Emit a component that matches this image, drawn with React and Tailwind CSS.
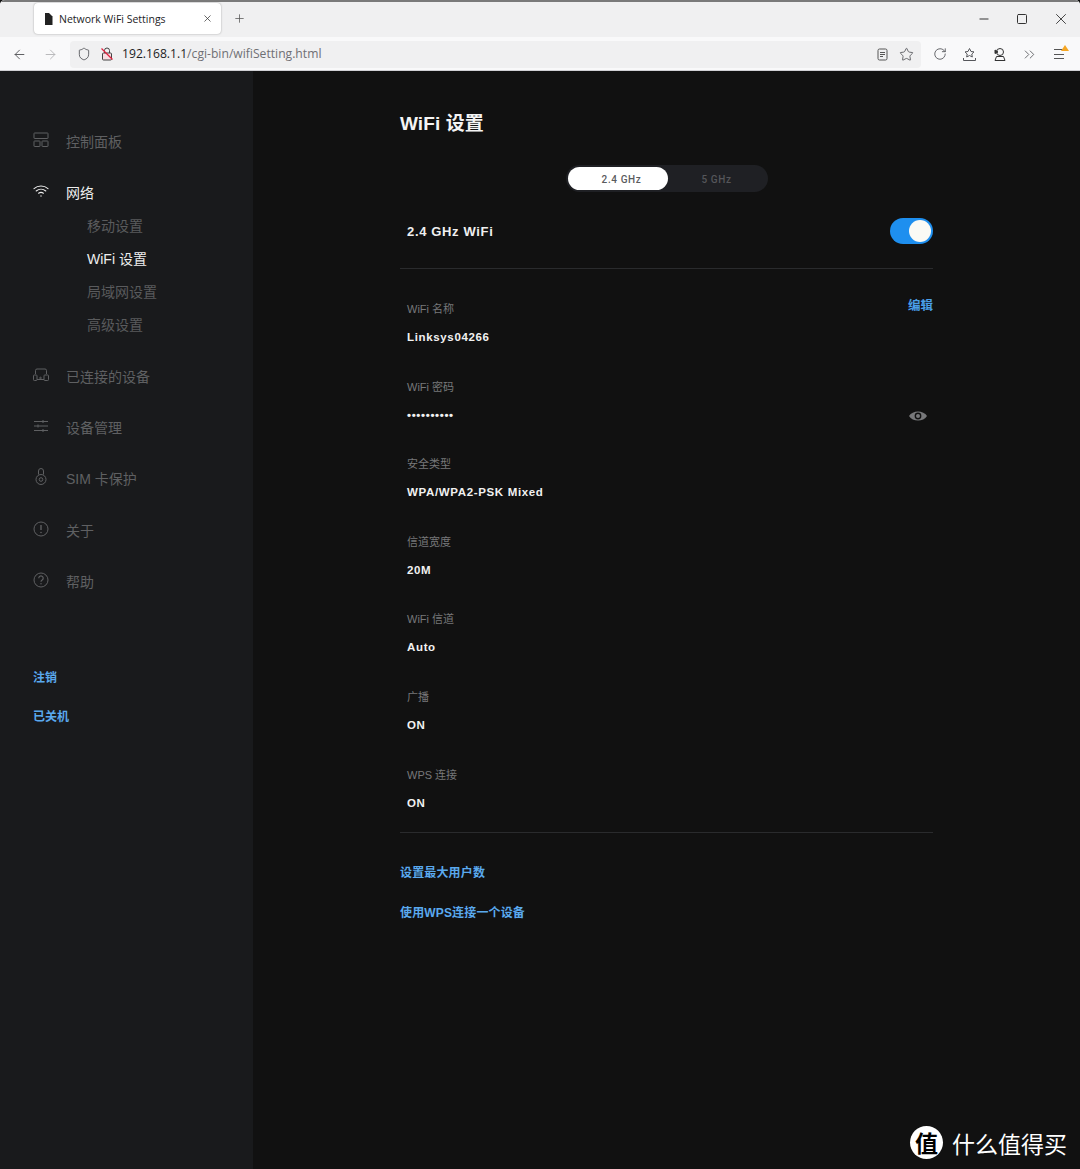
import React from 'react'
import { ArrowLeft, ArrowRight, RotateCw, X, Plus, Minus, Square, Shield, Star, ChevronsRight } from 'lucide-react'

const FONT = "font-['Liberation_Sans','Noto_Sans_CJK_SC',sans-serif]"

// sidebar icons, drawn to match the router admin page
const icons = {
  dashboard: (
    <svg width="16" height="16" viewBox="0 0 16 16" fill="none" stroke="currentColor" strokeWidth="1">
      <rect x="1" y="1" width="14" height="5.5" rx="0.5" />
      <rect x="1" y="9" width="6" height="5.5" rx="0.5" />
      <rect x="9" y="9" width="6" height="5.5" rx="0.5" />
    </svg>
  ),
  wifi: (
    <svg width="16" height="16" viewBox="0 0 16 16" fill="none" stroke="currentColor" strokeWidth="1.1" strokeLinecap="round">
      <path d="M1 5.6c4-3.4 10-3.4 14 0" />
      <path d="M3.2 8c2.8-2.3 6.8-2.3 9.6 0" />
      <path d="M5.6 10.2c1.5-1 3.3-1 4.8 0" />
      <circle cx="8" cy="13" r="0.7" fill="currentColor" stroke="none" />
    </svg>
  ),
  devices: (
    <svg width="16" height="16" viewBox="0 0 16 16" fill="none" stroke="currentColor" strokeWidth="1">
      <path d="M2.5 7V3.500A1.500 1.500 0 0 1 4 2h8a1.500 1.500 0 0 1 1.500 1.500V7" />
      <rect x="0.5" y="8" width="3.500" height="5.500" rx="0.800" />
      <rect x="11" y="8" width="4.500" height="5.500" rx="0.800" />
      <path d="M4 12.500h7" />
      <circle cx="7.500" cy="11" r="0.800" />
    </svg>
  ),
  sliders: (
    <svg width="16" height="16" viewBox="0 0 16 16" fill="none" stroke="currentColor" strokeWidth="1">
      <path d="M1 3.500h14M1 8h14M1 12.500h14" />
      <path d="M10 2v3M5 6.500v3M10 11v3" />
    </svg>
  ),
  lock: (
    <svg width="16" height="18" viewBox="0 0 16 18" fill="none" stroke="currentColor" strokeWidth="1">
      <path d="M5.500 6.500V3a2.500 2.500 0 0 1 5 0v3.500" />
      <circle cx="8" cy="11.500" r="5" />
      <circle cx="8" cy="11.500" r="1.800" />
    </svg>
  ),
  info: (
    <svg width="16" height="16" viewBox="0 0 16 16" fill="none" stroke="currentColor" strokeWidth="1">
      <circle cx="8" cy="8" r="7" />
      <path d="M8 4v5" strokeWidth="1.400" />
      <circle cx="8" cy="11.500" r="0.800" fill="currentColor" stroke="none" />
    </svg>
  ),
  help: (
    <svg width="16" height="16" viewBox="0 0 16 16" fill="none" stroke="currentColor" strokeWidth="1">
      <circle cx="8" cy="8" r="7" />
      <path d="M5.800 6.200a2.200 2.200 0 1 1 3.400 1.800c-.8.500-1.200 1-1.200 1.800" strokeWidth="1.200" />
      <circle cx="8" cy="11.800" r="0.700" fill="currentColor" stroke="none" />
    </svg>
  ),
}

const NavItem = ({ icon, label, active, className = '' }) => (
  <div className={`flex items-center h-6 ${active ? 'text-[#eeeeee]' : 'text-[#5f6062]'} ${className}`}>
    <span className="w-[33px] flex justify-start -mt-1">{icons[icon]}</span>
    <span className="text-sm">{label}</span>
  </div>
)

const SubItem = ({ label, active }) => (
  <div className={`h-[33px] flex items-center pl-[54px] text-sm ${active ? 'text-[#eeeeee]' : 'text-[#5a5b5d]'}`}>
    {label}
  </div>
)

const Sidebar = () => (
  <aside className="w-[253px] shrink-0 bg-[#191a1c] pl-[33px] pt-[59px]">
    <NavItem icon="dashboard" label="控制面板" />
    <NavItem icon="wifi" label="网络" active className="mt-[27px]" />
    <div className="-ml-[33px] pl-[33px] mt-[4px]">
      <SubItem label="移动设置" />
      <SubItem label="WiFi 设置" active />
      <SubItem label="局域网设置" />
      <SubItem label="高级设置" />
    </div>
    <NavItem icon="devices" label="已连接的设备" className="mt-[24px]" />
    <NavItem icon="sliders" label="设备管理" className="mt-[27px]" />
    <NavItem icon="lock" label="SIM 卡保护" className="mt-[27px]" />
    <NavItem icon="info" label="关于" className="mt-[28px]" />
    <NavItem icon="help" label="帮助" className="mt-[27px]" />
    <div className="mt-[76px] text-xs font-bold text-[#5aa9ee] leading-4">注销</div>
    <div className="mt-[23px] text-xs font-bold text-[#5aa9ee] leading-4">已关机</div>
  </aside>
)

const Field = ({ label, value, children }) => (
  <div className="h-[77.6px] pl-[7px] relative">
    <div className="text-[11px] leading-4 text-[#77787a] h-4">{label}</div>
    <div className="mt-3 text-[11.5px] leading-4 font-bold tracking-[0.65px] text-[#f1f1f1]">{value}</div>
    {children}
  </div>
)

const fields = [
  ['WiFi 密码', '••••••••••'],
  ['安全类型', 'WPA/WPA2-PSK Mixed'],
  ['信道宽度', '20M'],
  ['WiFi 信道', 'Auto'],
  ['广播', 'ON'],
  ['WPS 连接', 'ON'],
]

const Main = () => (
  <main className="flex-1 pl-[147px] pt-[41px]">
    <div className="w-[533px]">
      <h1 className="text-[19px] leading-6 font-bold tracking-[0.1px] text-[#f4f4f4]">WiFi 设置</h1>

      <div className="mt-[29px] flex justify-center">
        <div className="w-[202px] h-[27px] rounded-full bg-[#1f2024] p-[2px] flex font-['Roboto',sans-serif] text-[10px] font-medium tracking-[0.6px]">
          <div className="w-[100px] pl-[8px] pt-[2px] rounded-full bg-white text-[#5a5b5e] flex items-center justify-center">2.4 GHz</div>
          <div className="flex-1 pt-[2px] text-[#55565a] flex items-center justify-center">5 GHz</div>
        </div>
      </div>

      <div className="mt-[26px] h-[26px] pl-[7px] flex items-center justify-between">
        <span className="pt-[2px] text-[13px] font-bold tracking-[0.65px] text-[#efefef]">2.4 GHz WiFi</span>
        <div className="w-[43px] h-[26px] rounded-full bg-[#1e8fef] flex items-center justify-end pr-[2px]">
          <div className="w-[22px] h-[22px] rounded-full bg-[#fafaf5]" />
        </div>
      </div>

      <div className="mt-[24px] h-px bg-[#2a2b2d]" />

      <div className="pt-[32px]">
        <Field label="WiFi 名称" value="Linksys04266">
          <span className="absolute right-0 -top-[3px] text-[12.5px] leading-4 font-bold text-[#4a9fe8]">编辑</span>
        </Field>
        {fields.map(([label, value]) => (
          <Field key={label} label={label} value={value}>
            {label === 'WiFi 密码' && (
              <svg width="18" height="10" viewBox="0 0 18 10" className="absolute right-[6px] top-[32px]">
                <path d="M0 5C3.500 -1 14.500 -1 18 5 14.500 11 3.500 11 0 5z" fill="#77787a" />
                <circle cx="9" cy="5" r="3.400" fill="#111111" />
                <circle cx="9" cy="5" r="2" fill="#77787a" />
              </svg>
            )}
          </Field>
        ))}
      </div>

      <div className="-mt-[12px] h-px bg-[#2a2b2d]" />
      <div className="mt-[32px] text-xs leading-4 font-bold tracking-[0.15px] text-[#5aa9ee]">设置最大用户数</div>
      <div className="mt-[24px] text-xs leading-4 font-bold tracking-[0.15px] text-[#5aa9ee]">使用WPS连接一个设备</div>
    </div>
  </main>
)

const BrowserChrome = () => (
  <header className="h-[71px] shrink-0 font-['Open_Sans','Liberation_Sans',sans-serif] bg-[#f9f9fa] rounded-tl-[5px] rounded-tr-[5px] overflow-hidden">
    <div className="h-[37px] bg-[#f0f0f1] border-t-2 border-[#7a7a7a] flex items-start relative">
      <div className="ml-[34px] mt-[1px] w-[187px] h-[31px] bg-white rounded shadow-[0_0_2px_rgba(0,0,0,0.35)] flex items-center pl-[10px] pr-[8px]">
        <svg width="9" height="12" viewBox="0 0 9 12" fill="#222"><path d="M1 0h4l3.500 3.500V12H1z" /></svg>
        <span className="ml-[6px] pt-[2px] text-[10.500px] text-[#1d1d1f] flex-1">Network WiFi Settings</span>
        <X size={11} strokeWidth={1.6} className="text-[#333]" />
      </div>
      <Plus size={13} strokeWidth={1.4} className="ml-[12px] mt-[10px] text-[#555]" />
      <div className="ml-auto flex items-center text-[#333] mt-[8px]">
        <Minus size={14} strokeWidth={1.7} className="mr-[25px]" />
        <Square size={12} strokeWidth={2} className="mr-[24px]" />
        <X size={18} strokeWidth={1.2} className="mr-[10px]" />
      </div>
    </div>
    <div className="h-[34px] pt-[1px] flex items-center text-[#55565a] border-b border-[#d0d0d4]">
      <ArrowLeft size={15} strokeWidth={1.5} className="ml-[12px]" />
      <ArrowRight size={15} strokeWidth={1.5} className="ml-[16px] text-[#b5b5b8]" />
      <div className="ml-[12px] w-[851px] h-[27px] bg-[#f0f0f1] rounded flex items-center pl-[7px] pr-[7px]">
        <Shield size={14} strokeWidth={1.5} />
        <svg width="14" height="14" viewBox="0 0 14 14" fill="none" stroke="#444" strokeWidth="1" className="ml-[9px]">
          <rect x="2.500" y="6" width="9" height="7" rx="1" fill="#f8dde2" />
          <path d="M4.500 6V3.500a2.500 2.500 0 0 1 5 0V6" />
          <path d="M1.500 1.500l11 11" stroke="#e0223f" strokeWidth="1.300" />
        </svg>
        <span className="ml-[8px] text-[12.150px] text-[#1d1d1f]">192.168.1.1<span className="text-[#6f6f74]">/cgi-bin/wifiSetting.html</span></span>
        <svg width="13" height="13" viewBox="0 0 13 13" fill="none" stroke="#555" strokeWidth="1" className="ml-auto">
          <rect x="2" y="1" width="9" height="11" rx="1.500" />
          <path d="M4 4.500h5M4 6.500h5M4 8.500h3" />
        </svg>
        <Star size={15} strokeWidth={1.4} className="ml-[10px]" />
      </div>
      <RotateCw size={14} strokeWidth={1.5} className="ml-[12px]" />
      <svg width="15" height="15" viewBox="0 0 15 15" fill="none" stroke="#55565a" strokeWidth="1" className="ml-[15px]">
        <path d="M7.500 1.500l1.500 3 3 .4-2.200 2.100.5 3-2.800-1.500-2.800 1.500.5-3L3 4.900l3-.4z" />
        <path d="M1.500 11v2.500h12V11" />
      </svg>
      <svg width="15" height="15" viewBox="0 0 15 15" fill="none" stroke="#333" strokeWidth="1" className="ml-[15px]">
        <circle cx="8" cy="5" r="3.500" />
        <path d="M3 3l3 2-3 1.500z" fill="#333" />
        <path d="M3 13.500h10l-1.500-4h-7z" />
      </svg>
      <ChevronsRight size={17} className="ml-[14px]" strokeWidth={1.200} />
      <div className="ml-[16px] relative w-[14px] h-[12px] flex flex-col justify-between py-[1px]">
        <div className="h-px w-[10px] bg-[#555]" />
        <div className="h-px w-[10px] bg-[#555]" />
        <div className="h-px w-[10px] bg-[#555]" />
        <span className="absolute -right-[1px] -top-[3px] w-0 h-0 border-x-[4px] border-x-transparent border-b-[6px] border-b-[#f5a623]" />
      </div>
    </div>
  </header>
)

export default function App() {
  return (
    <div className={`relative h-[1169px] w-[1080px] overflow-hidden flex flex-col bg-[#111111] ${FONT}`}>
      <BrowserChrome />
      <div className="flex flex-1 min-h-0">
        <Sidebar />
        <Main />
      </div>
      {/* site watermark, lies over the page */}
      <div className="absolute left-[910px] top-[1126px] flex items-center">
        <div className="w-[33px] h-[33px] rounded-full bg-white text-black flex items-center justify-center text-[23px] font-['Noto_Sans_CJK_SC',sans-serif] font-bold">值</div>
        <span className="ml-[9px] text-[23px] leading-8 text-white font-['Noto_Sans_CJK_SC',sans-serif]">什么值得买</span>
      </div>
    </div>
  )
}
